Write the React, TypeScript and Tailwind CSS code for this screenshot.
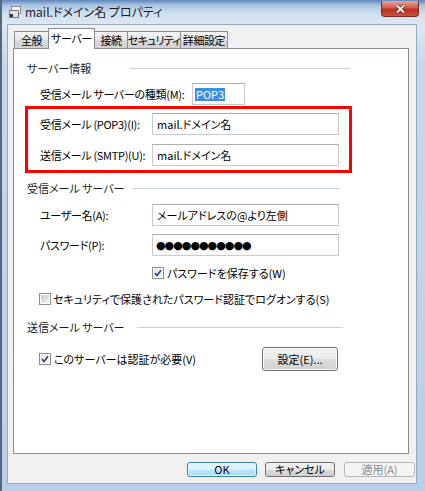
import React from "react";

const Check = ({ checked }: { checked: boolean }) => {
  return (
    <span className="w-[12px] h-[12px] shrink-0 border border-[#8e8f8f] bg-white p-[1px] flex">
      <span
        className={
          checked
            ? "flex-1 flex items-center justify-center bg-[linear-gradient(135deg,#dfe6f0,#fafcff)]"
            : "flex-1 bg-[linear-gradient(135deg,#c9cbcf,#f3f3f3)]"
        }
      >
        {checked && (
          <svg width="8" height="8" viewBox="0 0 8 8">
            <path d="M1 4.2 L3 6.4 L7 1.2" fill="none" stroke="#2b3f74" strokeWidth="1.6" />
          </svg>
        )}
      </span>
    </span>
  );
};

const Field = ({ value }: { value: string }) => {
  return (
    <div className="w-[187px] h-[22px] shrink-0 border border-[#c6cbd2] border-t-[#abadb3] bg-white flex items-center pl-[4px] whitespace-nowrap">
      {value}
    </div>
  );
};

const Heading = ({ label, lw, line }: { label: string; lw: string; line: string }) => {
  return (
    <div className="ml-[13px] h-[20px] flex items-center">
      <p className={`${lw} shrink-0 whitespace-nowrap text-[#1a1a1a]`}>{label}</p>
      <div className={`${line} h-px bg-[#c8d0d8]`}></div>
    </div>
  );
};

const tab =
  "-ml-px h-[17px] border border-b-0 border-[#898c95] bg-[linear-gradient(to_bottom,#f4f4f4,#e6e6e6_50%,#dadada_51%,#d2d2d2)] flex items-center justify-center whitespace-nowrap";

const label = "w-[112px] shrink-0 whitespace-nowrap tracking-[-0.3px]";

const App = () => {
  return (
    <section className="w-[425px] h-[491px] overflow-hidden flex flex-col border-l-[2px] border-[#56667c] bg-[linear-gradient(to_bottom,#5f86bd_0px,#a8c2e1_5px,#cfdff0_13px,#dce8f4_24px,#c5d9ee_60px,#b7cfea_100%)] font-['Noto_Sans_CJK_JP',sans-serif] [font-feature-settings:'palt']">
      {/* title bar */}
      <div className="h-[24px] flex items-start shrink-0">
        <div className="flex items-center h-[24px] pl-[6px]">
          <svg width="14" height="14" viewBox="0 0 14 14">
            <rect x="3.5" y="1.5" width="9" height="7" fill="#f4f4f4" stroke="#8a8a8a" />
            <rect x="1.5" y="5.5" width="9" height="7" fill="#e2e2e2" stroke="#777" />
            <rect x="2" y="9" width="3" height="3" fill="#333" />
          </svg>
          <p className="ml-[3px] text-[12px] leading-none text-[#1b1b1b] whitespace-nowrap">mail.ドメイン名 プロパティ</p>
        </div>
        <div className="ml-auto mr-[6px] mt-px w-[38px] h-[16px] rounded-b-[4px] border border-[#7a2b24] border-t-0 bg-[linear-gradient(to_bottom,#e8a89d,#d1594c_45%,#b8311f_55%,#c9533e)] flex items-center justify-center">
          <svg width="11" height="10" viewBox="0 0 11 10">
            <path d="M2 1.5 L9 8.5 M9 1.5 L2 8.5" stroke="#6b1f1a" strokeWidth="3.2" />
            <path d="M2 1.5 L9 8.5 M9 1.5 L2 8.5" stroke="#ffffff" strokeWidth="1.8" />
          </svg>
        </div>
      </div>

      {/* client area */}
      <div className="pl-[5px]">
        <div className="w-[410px] h-[460px] bg-[#f0f0f0] border border-[#9aa8b8] pl-[5px] pt-[3px] flex flex-col">
          {/* tabs */}
          <div className="h-[20px] ml-[2px] flex items-end text-[11px] leading-none tracking-[-0.4px] text-black">
            <div className={`${tab} w-[35px]`}>全般</div>
            <div className="relative z-10 -ml-px -mb-px w-[47px] h-[21px] border border-b-0 border-[#898c95] bg-white flex items-center justify-center pb-[2px] whitespace-nowrap">
              サーバー
            </div>
            <div className={`${tab} w-[34px]`}>接続</div>
            <div className={`${tab} w-[54px] tracking-[-0.8px]`}>セキュリティ</div>
            <div className={`${tab} w-[48px]`}>詳細設定</div>
          </div>

          {/* panel */}
          <div className="w-[396px] h-[406px] bg-white border border-[#898c95] pt-[9px] flex flex-col text-[11px] leading-none text-black">
            <Heading label="サーバー情報" lw="w-[103px]" line="w-[220px]" />

            <div className="ml-[26px] mt-[5px] h-[22px] flex items-center">
              <p className="w-[152px] shrink-0 whitespace-nowrap tracking-[-0.3px]">受信メール サーバーの種類(M):</p>
              <div className="w-[53px] h-[22px] border border-[#c6cbd2] border-t-[#abadb3] flex items-center pl-[2px]">
                <span className="bg-[#3d8ee6] text-white px-[1px] py-[1px]">POP3</span>
              </div>
            </div>

            <div className="ml-[11px] mt-[1px] w-[327px] border-[3px] border-[#ff0000] pl-[12px] pr-[10px] pt-[4px] pb-[4px] flex flex-col gap-[9px]">
              <div className="h-[22px] flex items-center">
                <p className={label}>受信メール (POP3)(I):</p>
                <Field value="mail.ドメイン名" />
              </div>
              <div className="h-[22px] flex items-center">
                <p className={label}>送信メール (SMTP)(U):</p>
                <Field value="mail.ドメイン名" />
              </div>
            </div>

            <div className="mt-[5px]">
              <Heading label="受信メール サーバー" lw="w-[106px]" line="w-[207px]" />
            </div>

            <div className="ml-[26px] mt-[6px] h-[22px] flex items-center">
              <p className={label}>ユーザー名(A):</p>
              <Field value="メールアドレスの@より左側" />
            </div>
            <div className="ml-[26px] mt-[8px] h-[22px] flex items-center">
              <p className={label}>パスワード(P):</p>
              <div className="w-[187px] h-[22px] border border-[#c6cbd2] border-t-[#abadb3] flex items-center pl-[3px] text-[11px] tracking-[-1px] font-['DejaVu_Sans',sans-serif] whitespace-nowrap">
                ●●●●●●●●●●●
              </div>
            </div>

            <div className="ml-[138px] mt-[9px] h-[16px] flex items-center gap-[3px] whitespace-nowrap">
              <Check checked />
              <p>パスワードを保存する(W)</p>
            </div>
            <div className="ml-[25px] mt-[10px] h-[16px] flex items-center gap-[2px] whitespace-nowrap">
              <Check checked={false} />
              <p>セキュリティで保護されたパスワード認証でログオンする(S)</p>
            </div>

            <div className="mt-[10px]">
              <Heading label="送信メール サーバー" lw="w-[110px]" line="w-[206px]" />
            </div>

            <div className="ml-[25px] mt-[10px] h-[24px] flex items-center">
              <div className="w-[223px] shrink-0 flex items-center gap-[3px] whitespace-nowrap">
                <Check checked />
                <p>このサーバーは認証が必要(V)</p>
              </div>
              <button className="w-[76px] h-[24px] rounded-[3px] border border-[#707070] bg-[linear-gradient(to_bottom,#f2f2f2,#ebebeb_50%,#dddddd_51%,#cfcfcf)] shadow-[inset_0_0_0_1px_#fbfbfb] flex items-center justify-center whitespace-nowrap">
                設定(E)...
              </button>
            </div>
          </div>

          {/* dialog buttons */}
          <div className="mt-[8px] ml-[174px] flex items-center gap-[8px] text-[11px] leading-none">
            <button className="w-[70px] h-[15px] rounded-[3px] border border-[#3c7fb1] bg-[linear-gradient(to_bottom,#eaf6fd,#d9f0fc_50%,#bee6fd_51%,#a7d9f5)] shadow-[inset_0_0_0_1px_#e8f6fd] flex items-center justify-center text-black">
              OK
            </button>
            <button className="w-[70px] h-[15px] rounded-[3px] border border-[#707070] bg-[linear-gradient(to_bottom,#f2f2f2,#ebebeb_50%,#dddddd_51%,#cfcfcf)] flex items-center justify-center text-black whitespace-nowrap">
              キャンセル
            </button>
            <button
              disabled
              className="ml-px w-[71px] h-[15px] rounded-[3px] border border-[#b5b9bc] bg-[#f4f4f4] flex items-center justify-center text-[#8b8b8b] whitespace-nowrap"
            >
              適用(A)
            </button>
          </div>
        </div>
      </div>
    </section>
  );
};

export default App;
